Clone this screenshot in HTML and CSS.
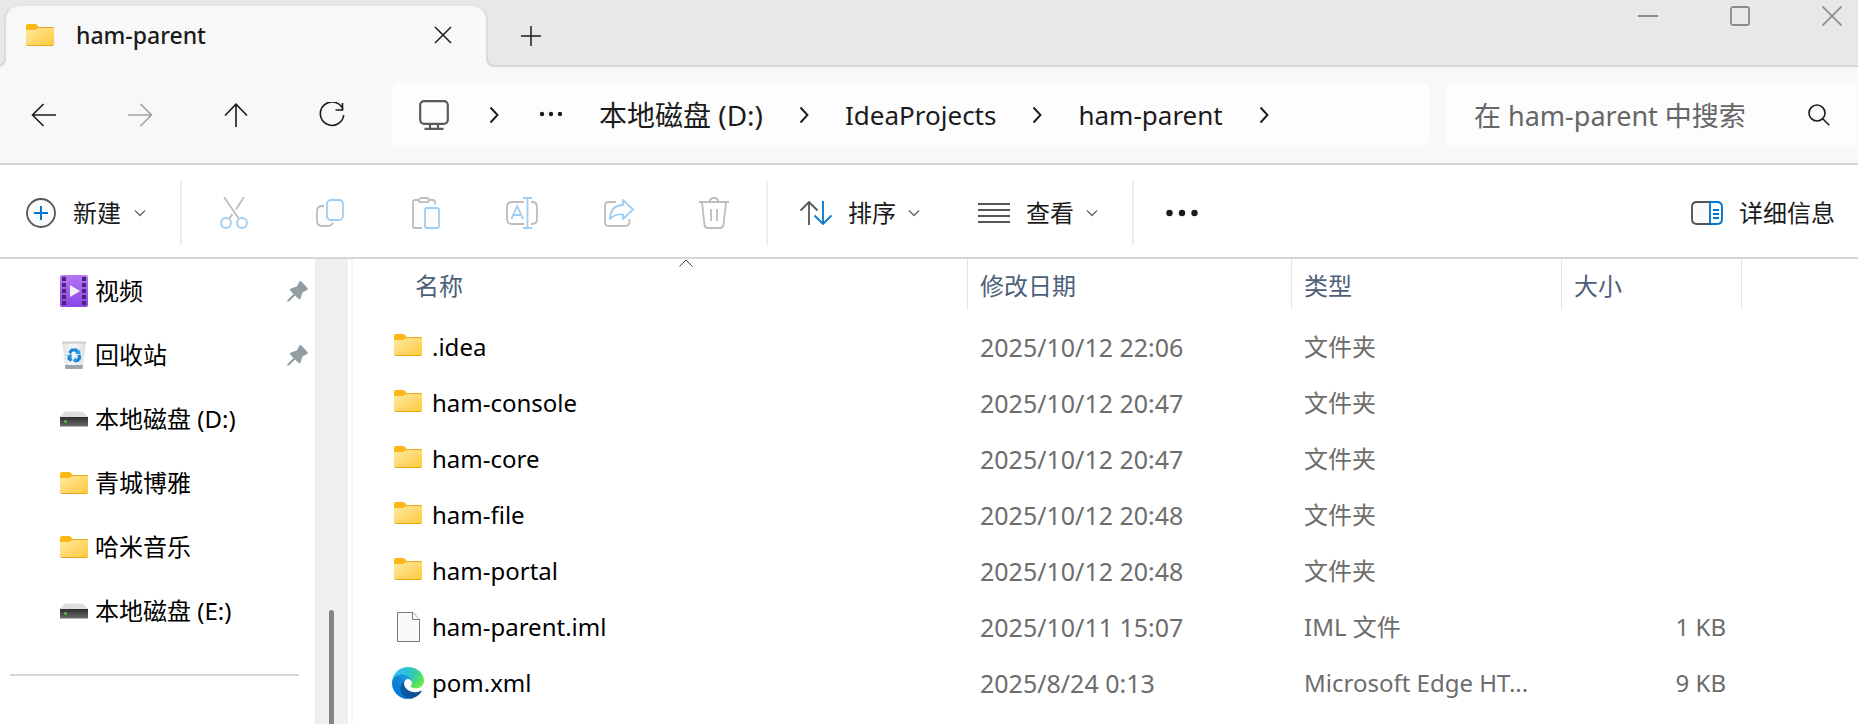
FILE: index.html
```html
<!DOCTYPE html>
<html lang="zh-CN">
<head>
<meta charset="UTF-8" />
<meta name="viewport" content="width=device-width, initial-scale=1" />
<title>ham-parent</title>
<link rel="stylesheet" href="styles.css">
</head>
<body>

<!-- Shared icons -->
<svg class="defs" aria-hidden="true">
  <defs>
    <linearGradient id="folderFill" x1="0" y1="0" x2="1" y2="1">
      <stop offset="0" stop-color="#ffe9a6" /><stop offset="1" stop-color="#ffc938" />
    </linearGradient>
    <linearGradient id="videoFill" x1="0" y1="0" x2="0" y2="1">
      <stop offset="0" stop-color="#b675f5" /><stop offset="1" stop-color="#8a45e6" />
    </linearGradient>
    <linearGradient id="binFill" x1="0" y1="0" x2="1" y2="0">
      <stop offset="0" stop-color="#dfe3e6" /><stop offset="0.5" stop-color="#f6f7f8" /><stop offset="1" stop-color="#d9dde0" />
    </linearGradient>
    <linearGradient id="driveFill" x1="0" y1="0" x2="0" y2="1">
      <stop offset="0" stop-color="#2e2e2e" /><stop offset="1" stop-color="#686868" />
    </linearGradient>
    <linearGradient id="edgeDark" x1="0.2" y1="0.5" x2="1" y2="0.5">
      <stop offset="0" stop-color="#0c59a4" /><stop offset="1" stop-color="#114a8b" />
    </linearGradient>
    <linearGradient id="edgeBlue" x1="0.8" y1="0.2" x2="0.3" y2="0.9">
      <stop offset="0" stop-color="#1b9de2" /><stop offset="0.4" stop-color="#1383d8" /><stop offset="1" stop-color="#0078d7" />
    </linearGradient>
    <radialGradient id="edgeGreen" cx="0.1" cy="0.2" r="1">
      <stop offset="0" stop-color="#35c1f1" /><stop offset="0.35" stop-color="#2cc0df" /><stop offset="0.65" stop-color="#36cda0" /><stop offset="1" stop-color="#66eb50" />
    </radialGradient>
  </defs>
  <symbol id="folder" viewBox="0 0 28 22">
    <path d="M0 1.5Q0 0 1.500 0H9Q10.200 0 11 1L12.500 3V8H0z" fill="#fbb917" />
    <path d="M0 6H8.500Q9.800 6 10.800 5L12.500 3H27Q28 3 28 4V20.500Q28 22 26.500 22H1.500Q0 22 0 20.500z" fill="url(#folderFill)" />
    <path d="M12 3.500H27.500M1 21.500H27" stroke="#e8a61c" fill="none" />
  </symbol>
  <symbol id="drive" viewBox="0 0 28 16">
    <path d="M5 0.500H23L28 6H0z" fill="#dcdde1" />
    <path d="M0 6H28V15H0z" fill="url(#driveFill)" />
    <path d="M0 15h28v0.700H0z" fill="#999" />
    <circle cx="5.500" cy="10.500" r="1.300" fill="#3be83b" />
  </symbol>
  <symbol id="pin" viewBox="0 0 21 21">
    <path d="M12.500 0.500Q13.500 -0.500 14.500 0.500L20.400 7Q21.200 8.200 20 9L15.500 11.500L13.500 17.500Q12.800 18.800 11.500 17.800L8 14.500L2 20.500L0.300 20.800L0.500 19L6.500 13L3.300 9.500Q2.500 8.200 3.800 7.500L9.700 5.500z" fill="#929da4" />
  </symbol>
  <symbol id="chevron-down" viewBox="0 0 12 8">
    <path d="M1 1.500L6 6.500L11 1.500" fill="none" stroke="#666" stroke-width="1.400" />
  </symbol>
  <symbol id="chevron-right" viewBox="0 0 10 18">
    <path d="M1.500 1.500L8.500 9L1.500 16.500" fill="none" stroke="#1b1b1b" stroke-width="1.900" />
  </symbol>
</svg>

<header class="titlebar">
  <div class="tab">
    <svg class="folder-icon"><use href="#folder" /></svg>
    <h1 class="tab-title">ham-parent</h1>
    <button class="icon-btn" aria-label="关闭标签页">
      <svg width="18" height="18" viewBox="0 0 18 18"><path d="M1 1L17 17M17 1L1 17" stroke="#1b1b1b" stroke-width="1.500" /></svg>
    </button>
  </div>
  <button class="icon-btn new-tab" aria-label="新建标签页">
    <svg width="20" height="20" viewBox="0 0 20 20"><path d="M10 0V20M0 10H20" stroke="#1b1b1b" stroke-width="1.500" /></svg>
  </button>
  <div class="window-controls">
    <button class="icon-btn" aria-label="最小化">
      <svg width="20" height="20" viewBox="0 0 20 20"><path d="M0 10H20" stroke="#8b8b8b" stroke-width="2" /></svg>
    </button>
    <button class="icon-btn" aria-label="最大化">
      <svg width="20" height="20" viewBox="0 0 20 20"><rect x="1" y="1" width="18" height="18" rx="2" fill="none" stroke="#8b8b8b" stroke-width="1.800" /></svg>
    </button>
    <button class="icon-btn" aria-label="关闭">
      <svg width="20" height="20" viewBox="0 0 20 20"><path d="M0.500 0.500L19.500 19.500M19.500 0.500L0.500 19.500" stroke="#8b8b8b" stroke-width="1.600" /></svg>
    </button>
  </div>
</header>

<div class="navbar">
  <div class="nav-buttons">
    <button class="icon-btn" aria-label="后退">
      <svg width="26" height="24" viewBox="0 0 26 24"><path d="M25 12H1.500M12.500 1L1.500 12L12.500 23" fill="none" stroke="#1b1b1b" stroke-width="1.600" /></svg>
    </button>
    <button class="icon-btn" aria-label="前进" disabled>
      <svg width="26" height="24" viewBox="0 0 26 24"><path d="M1 12H24.500M13.500 1L24.500 12L13.500 23" fill="none" stroke="#a0a0a0" stroke-width="1.600" /></svg>
    </button>
    <button class="icon-btn" aria-label="向上">
      <svg width="24" height="24" viewBox="0 0 24 24"><path d="M12 24V1.500M1 12.500L12 1.200L23 12.500" fill="none" stroke="#1b1b1b" stroke-width="1.600" /></svg>
    </button>
    <button class="icon-btn" aria-label="刷新">
      <svg width="26" height="26" viewBox="0 0 26 26"><path d="M24 7.500A11.700 11.700 0 1 0 24.700 13M23.500 1V8H16.500" fill="none" stroke="#1b1b1b" stroke-width="1.600" /></svg>
    </button>
  </div>
  <nav class="address" aria-label="地址">
    <svg class="monitor" width="30" height="30" viewBox="0 0 30 30">
      <g fill="none" stroke="#5a5a5a" stroke-width="2.200">
        <rect x="1.200" y="1.200" width="27.600" height="22.600" rx="4" />
        <path d="M11 24V28.500M19 24V28.500M5.500 28.800H24.500" />
      </g>
    </svg>
    <svg class="chevron-right"><use href="#chevron-right" /></svg>
    <button class="icon-btn more-path" aria-label="更多路径">
      <svg width="24" height="6" viewBox="0 0 24 6"><g fill="#1b1b1b"><circle cx="3" cy="3" r="2.200" /><circle cx="12" cy="3" r="2.200" /><circle cx="21" cy="3" r="2.200" /></g></svg>
    </button>
    <a class="crumb crumb-zh" href="#">本地磁盘 (D:)</a>
    <svg class="chevron-right"><use href="#chevron-right" /></svg>
    <a class="crumb" href="#">IdeaProjects</a>
    <svg class="chevron-right"><use href="#chevron-right" /></svg>
    <a class="crumb" href="#">ham-parent</a>
    <svg class="chevron-right"><use href="#chevron-right" /></svg>
  </nav>
  <div class="search">
    <input type="search" class="search-input" placeholder="在 ham-parent 中搜索" aria-label="在 ham-parent 中搜索" />
    <svg width="22" height="22" viewBox="0 0 22 22"><g fill="none" stroke="#1b1b1b" stroke-width="1.600"><circle cx="9" cy="9" r="8" /><path d="M14.500 14.500L21.300 21.300" /></g></svg>
  </div>
</div>

<div class="toolbar">
  <div class="tool-group new-group">
    <button class="tool">
      <svg width="30" height="30" viewBox="0 0 30 30"><circle cx="15" cy="15" r="14" fill="#fafafa" stroke="#555" stroke-width="1.800" /><path d="M15 8V22M8 15H22" stroke="#0078d4" stroke-width="2" /></svg>
      <span>新建</span>
      <svg class="chevron-down"><use href="#chevron-down" /></svg>
    </button>
  </div>
  <div class="tool-group edit-group">
    <button class="icon-btn" aria-label="剪切" disabled>
      <svg width="32" height="32" viewBox="0 0 32 32"><g fill="none" stroke-width="1.800"><path d="M6 0L21 22M26 0L18 12.500M14.500 17L11 22" stroke="#bdbdbd" /><circle cx="8" cy="26" r="5" stroke="#a0cdf0" /><circle cx="24" cy="26" r="5" stroke="#a0cdf0" /></g></svg>
    </button>
    <button class="icon-btn" aria-label="复制" disabled>
      <svg width="32" height="32" viewBox="0 0 32 32"><g fill="#fcfcfc" stroke-width="1.800"><path d="M10 9H8Q3 9 3 14V24Q3 29 8 29H13Q18 29 19 25.500" stroke="#bdbdbd" /><rect x="13" y="3" width="16" height="20" rx="4" stroke="#a0cdf0" /></g></svg>
    </button>
    <button class="icon-btn" aria-label="粘贴" disabled>
      <svg width="32" height="32" viewBox="0 0 32 32"><g fill="#fcfcfc" stroke-width="1.800"><path d="M8.500 3H5Q3 3 3 5V29Q3 31 5 31H12M19.500 3H23Q25 3 25 5V7.500" stroke="#bdbdbd" /><rect x="9" y="1" width="10" height="4.200" rx="2" stroke="#bdbdbd" /><rect x="15" y="11" width="14" height="20" rx="2" stroke="#a0cdf0" /></g></svg>
    </button>
    <button class="icon-btn" aria-label="重命名" disabled>
      <svg width="32" height="32" viewBox="0 0 32 32"><g fill="none" stroke-width="1.800"><path d="M18 5H6Q1 5 1 10V22Q1 27 6 27H18M25 5H26Q31 5 31 10V22Q31 27 26 27H25" stroke="#bdbdbd" /><path d="M5.500 22L11.200 9L17 22M7.500 18H15M21.500 1V31M17 1H26M17 31H26" stroke="#a0cdf0" /></g></svg>
    </button>
    <button class="icon-btn" aria-label="共享" disabled>
      <svg width="32" height="32" viewBox="0 0 32 32"><g fill="none" stroke-width="1.800" stroke-linejoin="round"><path d="M14 5H7Q3 5 3 9V25Q3 29 7 29H23Q27.500 29 27.500 25V22" stroke="#bdbdbd" /><path d="M21 3L31 12.500L21 22V17.500Q13 16.500 8 22Q8.500 8.500 21 8z" stroke="#a0cdf0" /></g></svg>
    </button>
    <button class="icon-btn" aria-label="删除" disabled>
      <svg width="32" height="32" viewBox="0 0 32 32"><g fill="none" stroke="#bdbdbd" stroke-width="1.800"><path d="M1 5H31M11.500 5Q12 1 16 1Q20 1 20.500 5M4 5L6.500 28Q7 31 10 31H22Q25 31 25.500 28L28 5M13 12V24M19 12V24" /></g></svg>
    </button>
  </div>
  <div class="tool-group view-group">
    <button class="tool">
      <svg width="32" height="24" viewBox="0 0 32 24"><g fill="none" stroke-width="1.800"><path d="M9 24V1M0.500 9.500L9 1L17.500 9.500" stroke="#555" /><path d="M23 0V23M14.500 14.500L23 23L31.500 14.500" stroke="#0078d4" /></g></svg>
      <span>排序</span>
      <svg class="chevron-down"><use href="#chevron-down" /></svg>
    </button>
    <button class="tool">
      <svg width="32" height="22" viewBox="0 0 32 22"><path d="M0 2H32M0 8H32M0 14H32M0 20H32" stroke="#555" stroke-width="1.800" /></svg>
      <span>查看</span>
      <svg class="chevron-down"><use href="#chevron-down" /></svg>
    </button>
  </div>
  <button class="icon-btn more-tools" aria-label="查看更多">
    <svg width="32" height="8" viewBox="0 0 32 8"><g fill="#1b1b1b"><circle cx="3.500" cy="4" r="3.200" /><circle cx="16" cy="4" r="3.200" /><circle cx="28.500" cy="4" r="3.200" /></g></svg>
  </button>
  <button class="tool details">
    <svg width="32" height="24" viewBox="0 0 32 24"><g stroke-width="1.900"><path d="M19 1H6Q1 1 1 6V18Q1 23 6 23H19" fill="#fafafa" stroke="#555" /><path d="M19 1H26Q31 1 31 6V18Q31 23 26 23H19z" fill="#fff" stroke="#0078d4" /><path d="M22 9H28M22 13H28M22 17H28" stroke="#0078d4" /></g></svg>
    <span>详细信息</span>
  </button>
</div>

<div class="content">
  <aside class="sidebar">
    <ul class="places">
      <li><a class="place" href="#">
        <svg width="28" height="32" viewBox="0 0 28 32">
          <rect width="28" height="32" rx="2" fill="url(#videoFill)" />
          <path d="M4 2V32M24 2V32" stroke="#4b2476" stroke-width="4" stroke-dasharray="4 2" />
          <path d="M10 10V22L20 16z" fill="#f4f0f8" />
        </svg>
        <span>视频</span>
        <svg class="pin"><use href="#pin" /></svg>
      </a></li>
      <li><a class="place" href="#">
        <svg width="28" height="28" viewBox="0 0 28 28">
          <path d="M2 1H26L22.500 27H5.500z" fill="url(#binFill)" />
          <path d="M2 0.500H26V2.500H2z" fill="#c8cdd1" />
          <path d="M5 24H23L22.500 28H5.500z" fill="#9ea4a8" />
          <path d="M9.500 12L12 9H16L17.500 11.500" fill="none" stroke="#1684d8" stroke-width="3.200" />
          <path d="M19 14L19.500 17L17.500 19.500H15M11.500 19.500L9 17.500L9.500 15" fill="none" stroke="#1684d8" stroke-width="3.200" />
          <path d="M15 12.500L20.500 13.500L20 8.500zM16 16V22.500L12.500 19.500zM6.500 14.500L11.500 13L12 17z" fill="#2f9ee8" />
        </svg>
        <span>回收站</span>
        <svg class="pin"><use href="#pin" /></svg>
      </a></li>
      <li><a class="place" href="#"><svg class="drive-icon"><use href="#drive" /></svg><span>本地磁盘 (D:)</span></a></li>
      <li><a class="place" href="#"><svg class="folder-icon"><use href="#folder" /></svg><span>青城博雅</span></a></li>
      <li><a class="place" href="#"><svg class="folder-icon"><use href="#folder" /></svg><span>哈米音乐</span></a></li>
      <li><a class="place" href="#"><svg class="drive-icon"><use href="#drive" /></svg><span>本地磁盘 (E:)</span></a></li>
    </ul>
    <hr class="divider" />
  </aside>
  <div class="scrollbar"><div class="thumb"></div></div>

  <main class="files">
    <table class="file-table">
      <colgroup>
        <col class="col-name"><col class="col-date"><col class="col-type"><col class="col-size"><col>
      </colgroup>
      <thead>
        <tr>
          <th aria-sort="ascending"><button class="sort-btn sort-name">名称
            <svg class="sort-arrow" width="14" height="8" viewBox="0 0 14 8"><path d="M0.500 7.500L7 1L13.500 7.500" fill="none" stroke="#444" /></svg>
          </button></th>
          <th><button class="sort-btn">修改日期</button></th>
          <th><button class="sort-btn">类型</button></th>
          <th><button class="sort-btn">大小</button></th>
          <td></td>
        </tr>
      </thead>
      <tbody>
        <tr>
          <td><a class="file" href="#"><svg class="folder-icon"><use href="#folder" /></svg>.idea</a></td>
          <td class="date">2025/10/12 22:06</td><td>文件夹</td><td></td><td></td>
        </tr>
        <tr>
          <td><a class="file" href="#"><svg class="folder-icon"><use href="#folder" /></svg>ham-console</a></td>
          <td class="date">2025/10/12 20:47</td><td>文件夹</td><td></td><td></td>
        </tr>
        <tr>
          <td><a class="file" href="#"><svg class="folder-icon"><use href="#folder" /></svg>ham-core</a></td>
          <td class="date">2025/10/12 20:47</td><td>文件夹</td><td></td><td></td>
        </tr>
        <tr>
          <td><a class="file" href="#"><svg class="folder-icon"><use href="#folder" /></svg>ham-file</a></td>
          <td class="date">2025/10/12 20:48</td><td>文件夹</td><td></td><td></td>
        </tr>
        <tr>
          <td><a class="file" href="#"><svg class="folder-icon"><use href="#folder" /></svg>ham-portal</a></td>
          <td class="date">2025/10/12 20:48</td><td>文件夹</td><td></td><td></td>
        </tr>
        <tr>
          <td><a class="file" href="#">
            <svg width="28" height="30" viewBox="0 0 28 30"><path d="M3.500 0.500H19L25.500 7.500V29.500H3.500z" fill="#fafafa" stroke="#777" /><path d="M18.500 0.500V7.500H25.500" fill="#fff" stroke="#777" /></svg>ham-parent.iml</a></td>
          <td class="date">2025/10/11 15:07</td><td>IML 文件</td><td class="size">1 KB</td><td></td>
        </tr>
        <tr>
          <td><a class="file" href="#">
            <svg class="edge-icon" viewBox="0 0 256 256"><g transform="translate(-4.630 -4.920)">
              <path fill="url(#edgeDark)" d="M235.680 195.460a93.730 93.730 0 0 1-10.540 4.710 101.870 101.870 0 0 1-35.900 6.460c-47.320 0-88.540-32.550-88.540-74.320A31.480 31.480 0 0 1 117.130 105c-42.800 1.800-53.800 46.400-53.800 72.530 0 73.880 68.090 81.370 82.760 81.370 7.910 0 19.840-2.300 27-4.560l1.310-.44a128.340 128.340 0 0 0 66.600-52.800 4 4 0 0 0-5.320-5.640z" />
              <path fill="url(#edgeBlue)" d="M110.340 246.340A79.200 79.200 0 0 1 87.600 225a80.720 80.720 0 0 1 29.530-120c3.120-1.470 8.450-4.130 15.540-4a32.350 32.350 0 0 1 25.690 13 31.880 31.880 0 0 1 6.360 18.660c0-.21 24.460-79.600-80-79.600-43.900 0-80 41.660-80 78.210a130.150 130.150 0 0 0 12.110 56 128 128 0 0 0 156.380 67.110 75.550 75.550 0 0 1-62.780-8z" />
              <path fill="url(#edgeGreen)" d="M156.940 153.780c-.81 1.050-3.300 2.500-3.300 5.660 0 2.610 1.700 5.120 4.720 7.230 14.380 10 41.490 8.680 41.560 8.680a59.560 59.560 0 0 0 30.270-8.350 61.380 61.380 0 0 0 30.430-52.880c.26-22.410-8-37.310-11.340-43.910C228.090 28.760 182.350 4.920 132.610 4.920a128 128 0 0 0-128 126.200c.48-36.540 36.800-66.050 80-66.050 3.500 0 23.460.34 42 10.070 16.340 8.580 24.900 18.940 30.850 29.210 6.180 10.670 7.280 24.150 7.280 29.520s-2.740 13.330-7.800 19.910z" />
            </g></svg>pom.xml</a></td>
          <td class="date">2025/8/24 0:13</td><td>Microsoft Edge HT...</td><td class="size">9 KB</td><td></td>
        </tr>
      </tbody>
    </table>
  </main>
</div>

</body>
</html>
```
FILE: styles.css
```css
* {
  box-sizing: border-box;
}

body {
  display: flex;
  flex-direction: column;
  min-height: 100vh;
  margin: 0;
  background: #fff;
  color: #1b1b1b;
  font-family: "Noto Sans", "Noto Sans CJK SC", sans-serif;
  font-size: 24px;
  line-height: 32px;
}

svg {
  display: block;
  flex: none;
}

a {
  color: inherit;
  text-decoration: none;
}

button {
  padding: 0;
  border: none;
  background: none;
  color: inherit;
  font: inherit;
}

.defs {
  position: absolute;
  width: 0;
  height: 0;
}

.icon-btn {
  display: flex;
  align-items: center;
  justify-content: center;
}

.folder-icon {
  width: 28px;
  height: 22px;
}

.drive-icon {
  width: 28px;
  height: 16px;
}

.chevron-down {
  width: 12px;
  height: 8px;
}

.chevron-right {
  width: 10px;
  height: 18px;
}

/* Title bar and tab */
.titlebar {
  display: flex;
  height: 67px;
  padding: 4px 16px 0 4px;
  background: #e8e8e8;
  box-shadow: inset 0 -2px #d8d8d8;
}

.tab {
  position: relative;
  display: flex;
  align-items: center;
  width: 484px;
  padding: 0 34px 4px 20px;
  border: 2px solid #dcdcdc;
  border-top-color: #e4e4e4;
  border-bottom: none;
  border-radius: 16px 16px 0 0;
  background: #f8f8f8;
}

/* curved feet on both sides of the tab */
.tab::before,
.tab::after {
  content: "";
  position: absolute;
  bottom: 0;
  width: 8px;
  height: 8px;
  border-bottom: 2px solid #d8d8d8;
  background: #e8e8e8;
}

.tab::before {
  right: 100%;
  border-right: 2px solid #d8d8d8;
  border-bottom-right-radius: 8px;
  box-shadow: 2px 2px 0 #f8f8f8;
}

.tab::after {
  left: 100%;
  border-left: 2px solid #d8d8d8;
  border-bottom-left-radius: 8px;
  box-shadow: -2px 2px 0 #f8f8f8;
}

.tab-title {
  flex: 1;
  margin: 0 0 0 22px;
  font-size: 23px;
  font-weight: 500;
}

.new-tab {
  width: 86px;
}

.window-controls {
  display: flex;
  gap: 72px;
  height: 24px;
  margin-left: auto;
}

/* Navigation */
.navbar {
  display: flex;
  align-items: center;
  height: 98px;
  border-bottom: 2px solid #d6d6d6;
  padding-right: 1px;
  background: #f8f8f8;
}

.nav-buttons {
  display: flex;
  width: 392px;
}

.nav-buttons .icon-btn {
  width: 96px;
  height: 64px;
  padding-right: 8px;
}

.address {
  display: flex;
  flex: 1;
  align-items: center;
  gap: 36px;
  height: 64px;
  margin-right: 16px;
  padding-left: 27px;
  border-radius: 8px;
  background: #fdfdfd;
}

.monitor {
  margin-right: 4px;
}

.more-path {
  margin: 0 0 2px 4px;
}

.crumb {
  font-size: 26px;
}

.crumb-zh {
  font-size: 28px;
}

.search {
  display: flex;
  align-items: center;
  width: 412px;
  height: 64px;
  padding: 0 27px 0 29px;
  border-radius: 8px;
  background: #fdfdfd;
}

.search-input {
  flex: 1;
  min-width: 0;
  padding: 2px 0 0;
  border: none;
  outline: none;
  background: none;
  font: inherit;
  font-size: 27px;
}

.search-input::placeholder {
  color: #666;
}

/* Toolbar */
.toolbar {
  display: flex;
  align-items: center;
  height: 94px;
  padding: 4px 23px 0 26px;
  border-bottom: 2px solid #d6d6d6;
}

.tool-group {
  display: flex;
  align-items: center;
  height: 64px;
  border-right: 2px solid #eee;
}

.tool {
  display: flex;
  align-items: center;
  gap: 16px;
}

.tool .chevron-down {
  margin-left: -4px;
}

.new-group {
  width: 156px;
}

.new-group .tool {
  gap: 17px;
}

.edit-group {
  gap: 64px;
  padding: 0 36px;
}

.view-group {
  gap: 58px;
  padding: 0 34px 0 32px;
}

.more-tools {
  margin-left: 32px;
}

.details {
  margin-left: auto;
}

/* Sidebar */
.content {
  display: flex;
  flex: 1;
}

.sidebar {
  width: 315px;
}

.places {
  margin: 0;
  padding: 0;
  list-style: none;
}

.place {
  display: flex;
  align-items: center;
  gap: 7px;
  height: 64px;
  padding: 0 7px 0 60px;
  color: #000;
}

.pin {
  width: 21px;
  height: 21px;
  margin-left: auto;
}

.divider {
  height: 2px;
  margin: 31px 16px 0 10px;
  border: none;
  background: #d6d6d6;
}

.scrollbar {
  display: flex;
  width: 33px;
  padding: 351px 14px 0;
  background: #efefef;
}

.thumb {
  flex: 1;
  border-radius: 3px 3px 0 0;
  background: #858585;
}

/* File list */
.files {
  flex: 1;
  min-width: 0;
  margin-left: 3px;
  border-left: 2px solid #f6f6f6;
}

.file-table {
  width: 100%;
  table-layout: fixed;
  border-spacing: 0;
  color: #6d6d6d;
}

.col-name {
  width: 615px;
}

.col-date {
  width: 324px;
}

.col-type {
  width: 270px;
}

.col-size {
  width: 180px;
}

.file-table th {
  padding: 0 0 8px;
  font-weight: 400;
}

.file-table td {
  height: 56px;
  padding: 2px 0 0 12px;
  white-space: nowrap;
}

.file-table thead td {
  height: 51px;
}

.file-table tbody td:first-child {
  padding-left: 41px;
}

.file-table .date {
  font-size: 25px;
}

.sort-btn {
  position: relative;
  display: flex;
  align-items: center;
  width: 100%;
  height: 51px;
  padding: 2px 0 0 12px;
  border-right: 1px solid #e5e5e5;
  color: #4c607a;
}

.sort-name {
  padding-left: 62px;
}

.sort-arrow {
  position: absolute;
  top: 0;
  left: 326px;
}

.file {
  display: flex;
  align-items: center;
  gap: 10px;
  color: #000;
}

.file .folder-icon {
  margin-bottom: 4px;
}

.edge-icon {
  width: 32px;
  height: 32px;
  margin: 0 -2px;
}

.file-table .size {
  padding-right: 16px;
  text-align: right;
}
```
